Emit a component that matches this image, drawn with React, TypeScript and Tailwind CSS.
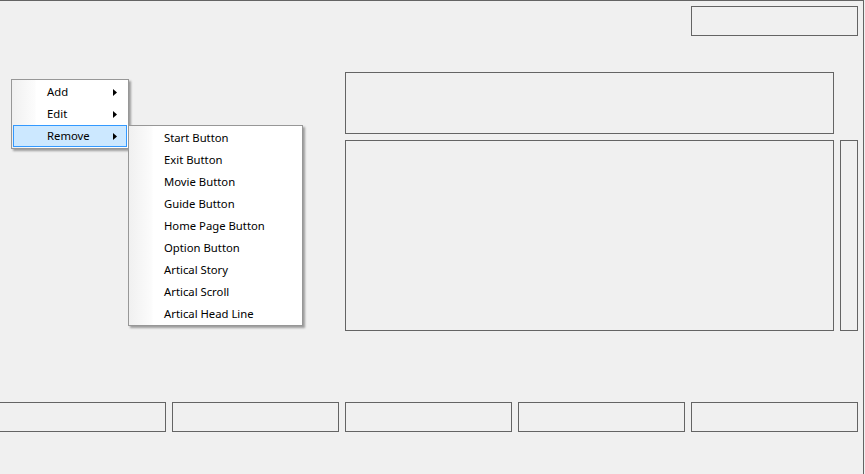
const subItems = [
  "Start Button",
  "Exit Button",
  "Movie Button",
  "Guide Button",
  "Home Page Button",
  "Option Button",
  "Artical Story",
  "Artical Scroll",
  "Artical Head Line",
];

function Arrow() {
  return (
    <svg width="4" height="7" viewBox="0 0 4 7" className="block">
      <path d="M0 0 L4 3.5 L0 7 Z" fill="#000" />
    </svg>
  );
}

function MenuItem({ label, hasArrow, active }: { label: string; hasArrow?: boolean; active?: boolean }) {
  return (
    <div
      className={
        active
          ? "mx-px h-[22px] flex items-center border border-[#3399ff] bg-[#cce8ff]"
          : "mx-px h-[22px] flex items-center border border-transparent"
      }
    >
      <span className="ml-[33px] flex-1">{label}</span>
      {hasArrow && (
        <span className="mr-[9px]">
          <Arrow />
        </span>
      )}
    </div>
  );
}

function Box({ className }: { className: string }) {
  return <div className={"border border-[#646464] " + className} />;
}

export default function App() {
  return (
    <div
      className="relative w-[865px] h-[474px] overflow-hidden bg-[#f0f0f0] text-[11.3px] text-black"
      style={{ fontFamily: '"Noto Sans", "Open Sans", sans-serif' }}
    >
      {/* form frame */}
      <div className="w-[864px] h-[474px] border-t border-r border-[#646464] flex flex-col">
        <div className="flex justify-end pr-[5px] pt-[5px]">
          <Box className="w-[167px] h-[30px]" />
        </div>

        <div className="ml-[345px] mt-[36px]">
          <Box className="w-[489px] h-[62px]" />
        </div>

        <div className="ml-[345px] mt-[6px] flex gap-[6px]">
          <Box className="w-[489px] h-[191px]" />
          <Box className="w-[18px] h-[191px]" />
        </div>

        <div className="-ml-px mt-[71px] flex gap-[6px]">
          <Box className="w-[167px] h-[30px]" />
          <Box className="w-[167px] h-[30px]" />
          <Box className="w-[167px] h-[30px]" />
          <Box className="w-[167px] h-[30px]" />
          <Box className="w-[167px] h-[30px]" />
        </div>
      </div>

      {/* context menu */}
      <div className="absolute left-[11px] top-[79px] w-[118px] h-[70px] border border-[#979797] py-px shadow-[2px_2px_2px_rgba(0,0,0,0.35)] bg-[linear-gradient(to_right,#f0f0f0_0px,#fcfcfc_23px,#ffffff_24px)]">
        <MenuItem label="Add" hasArrow />
        <MenuItem label="Edit" hasArrow />
        <MenuItem label="Remove" hasArrow active />
      </div>

      {/* sub menu */}
      <div className="absolute left-[128px] top-[125px] w-[175px] h-[201px] border border-[#979797] py-px shadow-[2px_2px_2px_rgba(0,0,0,0.35)] bg-[linear-gradient(to_right,#f0f0f0_0px,#fcfcfc_23px,#ffffff_24px)]">
        {subItems.map((s) => (
          <MenuItem key={s} label={s} />
        ))}
      </div>
    </div>
  );
}
